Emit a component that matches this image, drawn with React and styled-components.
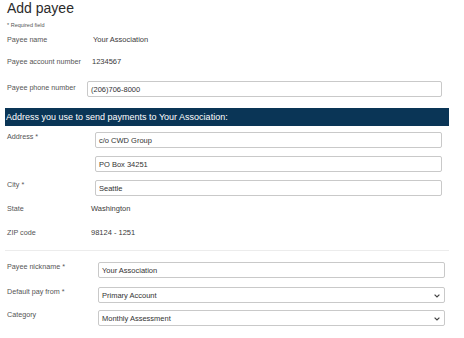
import React from 'react';
import styled, { createGlobalStyle } from 'styled-components';

const GlobalStyle = createGlobalStyle`
  html, body {
    margin: 0;
    padding: 0;
    background: #fff;
  }
  body {
    font-family: "Liberation Sans", Arial, sans-serif;
  }
`;

const Page = styled.div`
  width: 444px;
  padding-left: 5px;
  display: flex;
  flex-direction: column;
  color: #333;
`;

const Title = styled.h1`
  margin: 0 0 0 2px;
  font-size: 14px;
  line-height: 16px;
  font-weight: normal;
  color: #2b2b2b;
`;

const Required = styled.div`
  margin: 5px 0 0 2px;
  font-size: 5.5px;
  line-height: 8px;
  color: #555;
`;

const Row = styled.div`
  display: flex;
  align-items: ${p => (p.$center ? 'center' : 'flex-start')};
  height: ${p => p.$h || 16}px;
  margin-top: ${p => p.$mt || 0}px;
  padding-right: ${p => p.$pr || 7}px;
`;

const Label = styled.div`
  flex: 0 0 ${p => p.$w}px;
  box-sizing: border-box;
  padding-left: 2px;
  font-size: 7.2px;
  line-height: 9px;
  color: #555;
  white-space: nowrap;
`;

const Value = styled.div`
  font-size: 7.5px;
  line-height: 9px;
  color: #3a3a3a;
`;

const Field = styled.div`
  flex: 1;
  position: relative;
  height: 16px;
  box-sizing: border-box;
  border: 1px solid #c9c9c9;
  border-radius: 2px;
  background: #fff;
  display: flex;
  align-items: center;
  padding-left: 3px;
  font-size: 7.5px;
  color: #333;
`;

const Chevron = styled.svg`
  position: absolute;
  right: 4px;
  top: 6px;
`;

const Band = styled.div`
  margin-top: 11px;
  height: 18px;
  background: #0a3556;
  color: #fff;
  font-size: 9px;
  display: flex;
  align-items: center;
  padding-left: 1px;
  white-space: nowrap;
`;

const Divider = styled.hr`
  margin: 10px 0 0 0;
  border: none;
  border-top: 1px solid #ececec;
  height: 0;
`;

function Select({ children }) {
  return (
    <Field>
      {children}
      <Chevron width="6" height="4" viewBox="0 0 6 4">
        <path d="M0.6 0.6 L3 3 L5.4 0.6" fill="none" stroke="#444" strokeWidth="1.2" />
      </Chevron>
    </Field>
  );
}

export default function App() {
  return (
    <>
      <GlobalStyle />
      <Page>
        <Title>Add payee</Title>
        <Required>* Required field</Required>

        <Row $h={18} $mt={1} $center>
          <Label $w={88}>Payee name</Label>
          <Value>Your Association</Value>
        </Row>
        <Row $h={18} $mt={4} $center>
          <Label $w={87}>Payee account number</Label>
          <Value>1234567</Value>
        </Row>
        <Row $mt={11}>
          <Label $w={82} style={{ paddingTop: 2 }}>Payee phone number</Label>
          <Field>(206)706-8000</Field>
        </Row>

        <Band>Address you use to send payments to Your Association:</Band>

        <Row $mt={6}>
          <Label $w={90}>Address *</Label>
          <Field>c/o CWD Group</Field>
        </Row>
        <Row $mt={8}>
          <Label $w={90} />
          <Field>PO Box 34251</Field>
        </Row>
        <Row $mt={8}>
          <Label $w={90}>City *</Label>
          <Field>Seattle</Field>
        </Row>
        <Row $mt={4} $center>
          <Label $w={86}>State</Label>
          <Value>Washington</Value>
        </Row>
        <Row $mt={8} $center>
          <Label $w={86}>ZIP code</Label>
          <Value>98124 - 1251</Value>
        </Row>

        <Divider />

        <Row $mt={11} $pr={4}>
          <Label $w={93}>Payee nickname *</Label>
          <Field>Your Association</Field>
        </Row>
        <Row $mt={9} $pr={4}>
          <Label $w={93}>Default pay from *</Label>
          <Select>Primary Account</Select>
        </Row>
        <Row $mt={7} $pr={4}>
          <Label $w={93}>Category</Label>
          <Select>Monthly Assessment</Select>
        </Row>
      </Page>
    </>
  );
}
